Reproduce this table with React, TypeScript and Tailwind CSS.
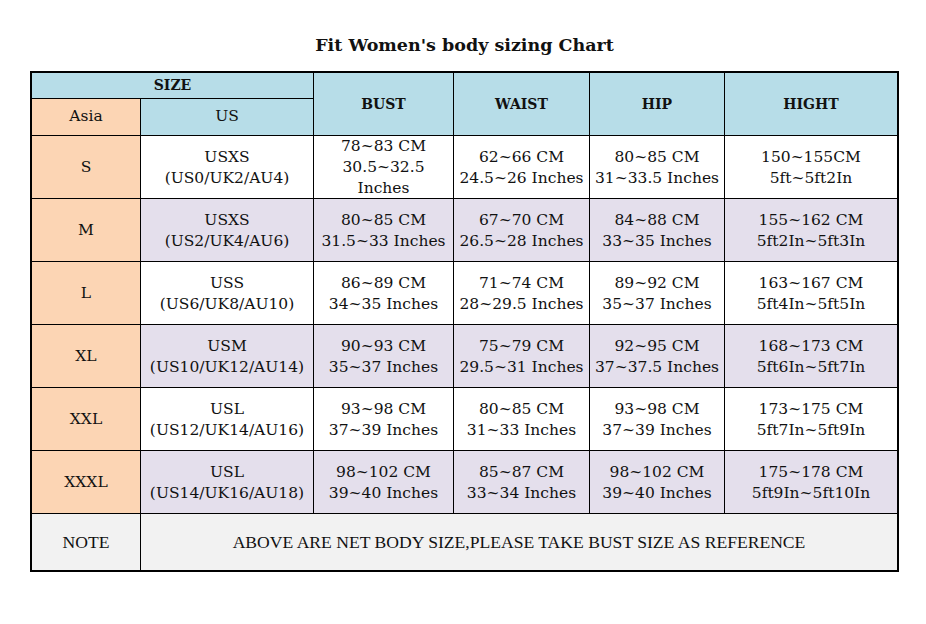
import React from "react";

type Row = { asia: string; us: string[]; bust: string[]; waist: string[]; hip: string[]; hight: string[]; alt: boolean };

const rows: Row[] = [
  { asia: "S", us: ["USXS", "(US0/UK2/AU4)"], bust: ["78~83 CM", "30.5~32.5", "Inches"], waist: ["62~66 CM", "24.5~26 Inches"], hip: ["80~85 CM", "31~33.5 Inches"], hight: ["150~155CM", "5ft~5ft2In"], alt: false },
  { asia: "M", us: ["USXS", "(US2/UK4/AU6)"], bust: ["80~85 CM", "31.5~33 Inches"], waist: ["67~70 CM", "26.5~28 Inches"], hip: ["84~88 CM", "33~35 Inches"], hight: ["155~162 CM", "5ft2In~5ft3In"], alt: true },
  { asia: "L", us: ["USS", "(US6/UK8/AU10)"], bust: ["86~89 CM", "34~35 Inches"], waist: ["71~74 CM", "28~29.5 Inches"], hip: ["89~92 CM", "35~37 Inches"], hight: ["163~167 CM", "5ft4In~5ft5In"], alt: false },
  { asia: "XL", us: ["USM", "(US10/UK12/AU14)"], bust: ["90~93 CM", "35~37 Inches"], waist: ["75~79 CM", "29.5~31 Inches"], hip: ["92~95 CM", "37~37.5 Inches"], hight: ["168~173 CM", "5ft6In~5ft7In"], alt: true },
  { asia: "XXL", us: ["USL", "(US12/UK14/AU16)"], bust: ["93~98 CM", "37~39 Inches"], waist: ["80~85 CM", "31~33 Inches"], hip: ["93~98 CM", "37~39 Inches"], hight: ["173~175 CM", "5ft7In~5ft9In"], alt: false },
  { asia: "XXXL", us: ["USL", "(US14/UK16/AU18)"], bust: ["98~102 CM", "39~40 Inches"], waist: ["85~87 CM", "33~34 Inches"], hip: ["98~102 CM", "39~40 Inches"], hight: ["175~178 CM", "5ft9In~5ft10In"], alt: true },
];

function Cell({ lines, alt }: { lines: string[]; alt: boolean }) {
  return (
    <div className={`flex flex-col items-center justify-center pt-px text-center leading-[21px] whitespace-nowrap ${alt ? "bg-[#e4dfec]" : "bg-white"}`}>
      {lines.map((l, i) => (
        <span key={i}>{l}</span>
      ))}
    </div>
  );
}

export default function App() {
  return (
    <div className="w-[926px] h-[624px] bg-white text-[#111]" style={{ fontFamily: '"DejaVu Serif", serif' }}>
      <div className="pt-[34px] ml-[30px] w-[869px] text-center font-bold text-[17.5px] leading-[22px]">
        Fit Women's body sizing Chart
      </div>
      <div
        className="mt-[15px] ml-[30px] w-[869px] border-2 border-black bg-black grid gap-px text-[15.5px]"
        style={{
          gridTemplateColumns: "108px 172px 139px 135px 134px 172px",
          gridTemplateRows: "25px 36px 62px 62px 62px 62px 62px 62px 56px",
        }}
      >
        <div className="col-span-2 bg-[#b7dde8] flex items-center justify-center font-bold text-[14px]">SIZE</div>
        <div className="row-span-2 bg-[#b7dde8] flex items-center justify-center font-bold text-[14px]">BUST</div>
        <div className="row-span-2 bg-[#b7dde8] flex items-center justify-center font-bold text-[14px]">WAIST</div>
        <div className="row-span-2 bg-[#b7dde8] flex items-center justify-center font-bold text-[14px]">HIP</div>
        <div className="row-span-2 bg-[#b7dde8] flex items-center justify-center font-bold text-[14px]">HIGHT</div>
        <div className="bg-[#fcd5b4] flex items-center justify-center">Asia</div>
        <div className="bg-[#b7dde8] flex items-center justify-center">US</div>
        {rows.map((r) => (
          <React.Fragment key={r.asia}>
            <div className="bg-[#fcd5b4] flex items-center justify-center pt-px">{r.asia}</div>
            <Cell lines={r.us} alt={r.alt} />
            <Cell lines={r.bust} alt={r.alt} />
            <Cell lines={r.waist} alt={r.alt} />
            <Cell lines={r.hip} alt={r.alt} />
            <Cell lines={r.hight} alt={r.alt} />
          </React.Fragment>
        ))}
        <div className="bg-[#f2f2f2] flex items-center justify-center text-[17.6px] pt-px" style={{ fontFamily: '"Liberation Serif", serif' }}>NOTE</div>
        <div className="col-span-5 bg-[#f2f2f2] flex items-center justify-center text-[17.6px] pt-px" style={{ fontFamily: '"Liberation Serif", serif' }}>
          ABOVE ARE NET BODY SIZE,PLEASE TAKE BUST SIZE AS REFERENCE
        </div>
      </div>
    </div>
  );
}
